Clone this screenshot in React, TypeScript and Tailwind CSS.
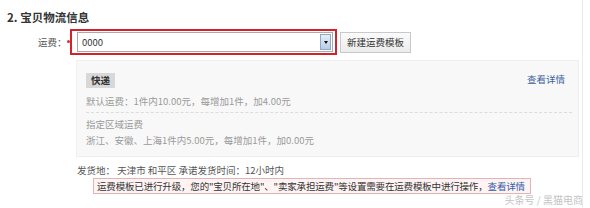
import React from "react";

const font = { fontFamily: '"Noto Sans CJK SC", "Noto Sans", sans-serif' };

export default function App() {
  return (
    <div className="w-[590px] h-[208px] bg-white overflow-hidden relative" style={font}>
      <div className="w-[583px] h-full border-r border-[#e9ecef]">
        <div className="pt-[10px] pl-[7px] h-[25px] leading-[15px] text-[11.5px] font-bold text-[#333]">
          2. 宝贝物流信息
        </div>
        <div className="mt-[4px] flex items-center h-[26px]">
          <div className="w-[62px] pl-[38px] text-[9.5px] text-[#555] leading-[14px] whitespace-nowrap">运费：</div>
          <div className="w-[3px] h-[3px] rounded-full bg-[#d32] ml-[5px] mb-[2px]" />
          <div className="w-[267px] h-[26px] border-2 border-[#d3222b] flex items-center pl-[5px] pr-[2px]">
            <div className="w-[256px] h-[20px] border border-[#a9a9a9] bg-white flex items-center justify-between pl-[4px] pr-[1px]">
              <span className="text-[9.5px] text-[#333] leading-[14px]">0000</span>
              <div className="w-[11px] h-[16px] border border-[#8fa9c8] bg-gradient-to-b from-[#e6eef8] to-[#b9cde6] flex items-center justify-center">
                <div className="w-0 h-0 border-l-[2.5px] border-r-[2.5px] border-t-[3px] border-l-transparent border-r-transparent border-t-[#111]" />
              </div>
            </div>
          </div>
          <div className="ml-[3px] w-[71px] h-[21px] border border-[#c9c9c9] bg-gradient-to-b from-[#fbfbfb] to-[#ececec] text-[9.5px] text-[#333] flex items-center justify-center">
            新建运费模板
          </div>
        </div>
        <div className="mt-[5px] ml-[76px] w-[503px] h-[97px] bg-[#f8f8f8] border border-[#efefef] pt-[12px] pl-[9px] pr-[6px]">
          <div className="flex justify-between items-center h-[15px]">
            <span className="h-[15px] px-[5px] bg-[#d8d8d8] text-[9.5px] font-bold text-[#333] leading-[15px]">快递</span>
            <span className="text-[9.5px] text-[#3d5f9c] leading-[14px] mr-[7px] -mt-[3px]">查看详情</span>
          </div>
          <div className="mt-[6px] h-[14px] text-[9.5px] leading-[14px] text-[#9a9a9a] whitespace-nowrap">
            默认运费：1件内10.00元，每增加1件，加4.00元
          </div>
          <div className="mt-[4px] border-t border-dashed border-[#dcdcdc]" />
          <div className="mt-[4px] h-[14px] text-[9.5px] leading-[14px] text-[#9a9a9a] whitespace-nowrap">指定区域运费</div>
          <div className="mt-[2px] h-[14px] text-[9.5px] leading-[14px] text-[#9a9a9a] whitespace-nowrap">
            浙江、安徽、上海1件内5.00元，每增加1件，加0.00元
          </div>
        </div>
        <div className="mt-[6px] pl-[77px] h-[14px] text-[9.5px] leading-[14px] text-[#555] whitespace-nowrap">
          发货地：&nbsp;天津市 和平区 承诺发货时间：12小时内
        </div>
        <div className="mt-[1px] ml-[93px] w-[438px] h-[16px] border border-[#e3b4b4] bg-[#fff3f3] text-[9.5px] leading-[14px] tracking-[-0.17px] text-[#333] pl-[3px] whitespace-nowrap">
          运费模板已进行升级，您的"宝贝所在地"、"卖家承担运费"等设置需要在运费模板中进行操作，<span className="text-[#2f5ba8]">查看详情</span>
        </div>
      </div>
      <div className="absolute right-[7px] top-[194px] text-[10px] leading-[12px] text-[#c4c4c4] whitespace-nowrap">
        头条号 / 黑猫电商
      </div>
    </div>
  );
}
